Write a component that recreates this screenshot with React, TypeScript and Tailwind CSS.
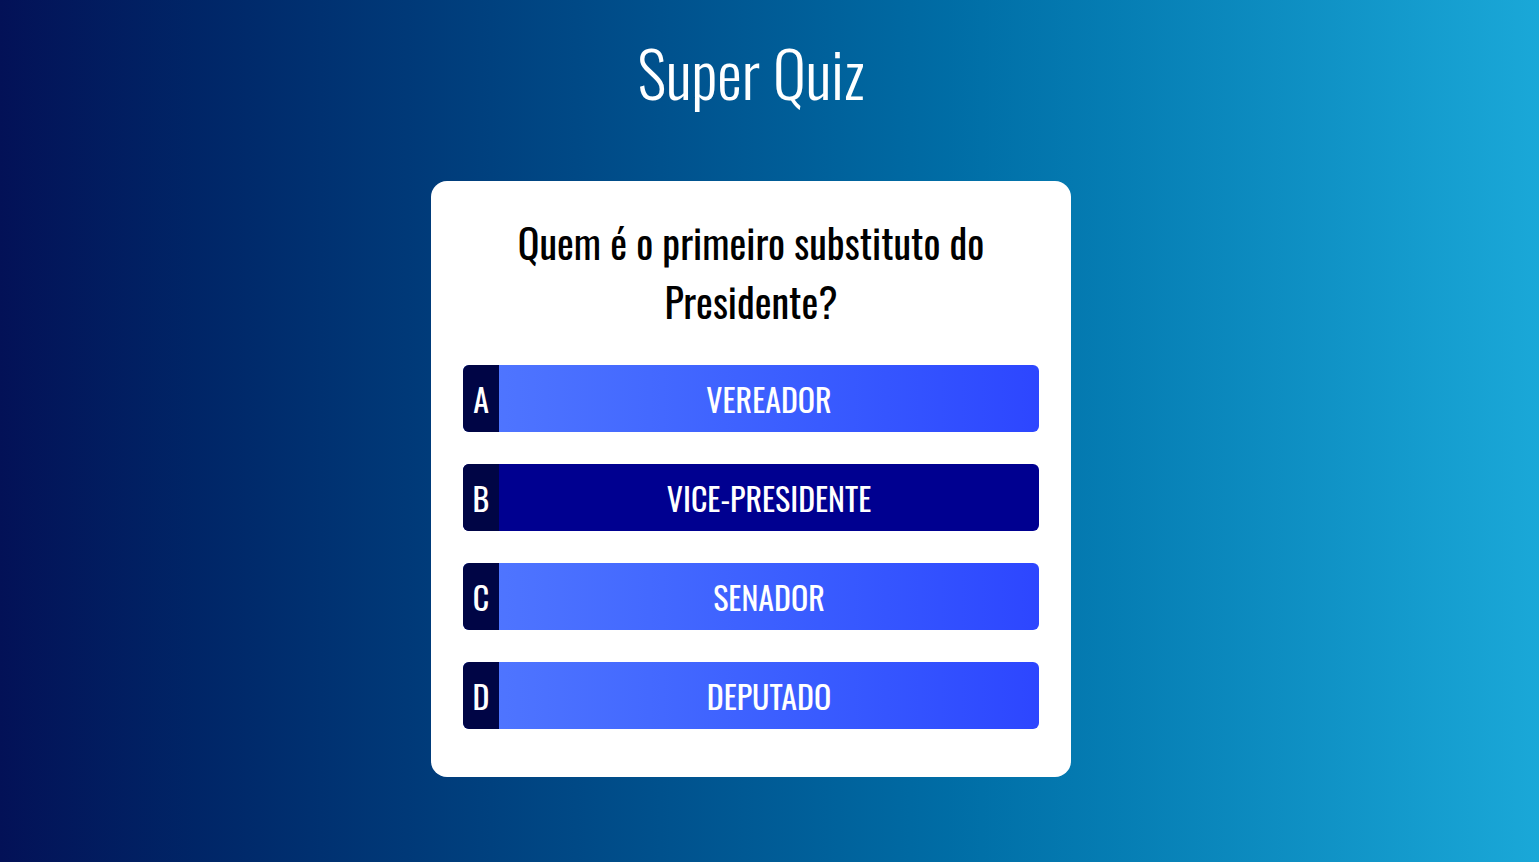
import React from "react";

const answers = [
  { letter: "A", text: "VEREADOR", selected: false },
  { letter: "B", text: "VICE-PRESIDENTE", selected: true },
  { letter: "C", text: "SENADOR", selected: false },
  { letter: "D", text: "DEPUTADO", selected: false },
];

const font = "font-['Oswald','Liberation_Sans_Narrow','DejaVu_Sans_Condensed','Roboto_Condensed',sans-serif]";

export default function App() {
  return (
    <div
      className={`min-h-[862px] w-full bg-gradient-to-r from-[#031157] to-[#1aa8d8] flex flex-col items-center pr-[37px] ${font}`}
    >
      <h1 className="mt-[32px] h-[80px] text-[62px] leading-[80px] font-light text-white">
        Super Quiz
      </h1>

      <div className="mt-[69px] w-[640px] bg-white rounded-2xl px-8 pt-8 pb-12">
        <h2 className="text-center text-[40px] leading-[59px] text-black mb-[34px]">
          Quem é o primeiro substituto do Presidente?
        </h2>

        <div className="flex flex-col gap-8">
          {answers.map((a) => (
            <button
              key={a.letter}
              className={`flex h-[67px] w-full rounded-md overflow-hidden text-white ${
                a.selected
                  ? "bg-[#000090]"
                  : "bg-gradient-to-r from-[#5177ff] to-[#2d46ff]"
              }`}
            >
              <span className="w-9 h-full bg-[#000545] flex items-center justify-center text-[32px]">
                {a.letter}
              </span>
              <span className="flex-1 h-full flex items-center justify-center text-[32px]">
                {a.text}
              </span>
            </button>
          ))}
        </div>
      </div>
    </div>
  );
}
